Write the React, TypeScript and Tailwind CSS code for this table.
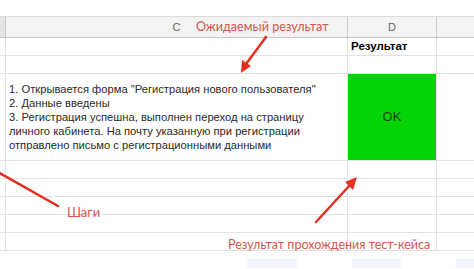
const rows = [18, 18, 18, 18, 18];

function Arrows() {
  return (
    <svg className="absolute inset-0 pointer-events-none" width="474" height="269" viewBox="0 0 474 269">
      {/* expected result -> cell */}
      <line x1="266" y1="37" x2="246" y2="64" stroke="#e5301f" strokeWidth="2.5" strokeLinecap="round" />
      <polygon points="241,73 242,60 251,66" fill="#e5301f" />
      {/* steps */}
      <line x1="-4" y1="171" x2="58" y2="206" stroke="#e5301f" strokeWidth="2.5" strokeLinecap="round" />
      {/* test result -> cell */}
      <line x1="316" y1="222" x2="350" y2="185" stroke="#e5301f" strokeWidth="2.5" strokeLinecap="round" />
      <polygon points="357,177 353,190 345,182" fill="#e5301f" />
    </svg>
  );
}

export default function App() {
  return (
    <div className="relative w-[474px] h-[269px] overflow-hidden bg-white font-['Liberation_Sans',Arial,sans-serif] text-[#222]">
      <div className="h-[16px]" />
      <div className="grid grid-cols-[6px_342px_89px_1fr] border-t border-[#dcdcdc]">
        {/* header */}
        <div className="h-[21px] bg-[#e4e4e4] border-r border-b border-[#c8c8c8]" />
        <div className="h-[21px] bg-[#f3f3f3] border-r border-b border-[#c8c8c8] flex items-center justify-center text-[11px] text-[#666]">
          C
        </div>
        <div className="h-[21px] bg-[#f3f3f3] border-r border-b border-[#c8c8c8] flex items-center justify-center text-[11px] text-[#666]">
          D
        </div>
        <div className="h-[21px] bg-[#f3f3f3] border-b border-[#c8c8c8]" />

        {/* row: title */}
        <div className="h-[18px] border-r border-b border-[#e2e2e2]" />
        <div className="h-[18px] border-r border-b border-[#e2e2e2]" />
        <div className="h-[18px] border-r border-b border-[#e2e2e2] flex items-center px-[3px] text-[11.5px] font-bold text-black">
          Результат
        </div>
        <div className="h-[18px] border-b border-[#e2e2e2]" />

        {/* empty row */}
        <div className="h-[18px] border-r border-b border-[#e2e2e2]" />
        <div className="h-[18px] border-r border-b border-[#e2e2e2]" />
        <div className="h-[18px] border-r border-b border-[#e2e2e2]" />
        <div className="h-[18px] border-b border-[#e2e2e2]" />

        {/* steps row */}
        <div className="h-[87px] border-r border-b border-[#e2e2e2]" />
        <div className="h-[87px] border-r border-b border-[#e2e2e2] flex flex-col justify-center px-[3px] text-[11.2px] leading-[14px] text-[#2a2a2a]">
          <span>1. Открывается форма "Регистрация нового пользователя"</span>
          <span>2. Данные введены</span>
          <span>3. Регистрация успешна, выполнен переход на страницу</span>
          <span>личного кабинета. На почту указанную при регистрации</span>
          <span>отправлено письмо с регистрационными данными</span>
        </div>
        <div className="h-[87px] border-r border-b border-[#e2e2e2] bg-[#04d404] flex items-center justify-center text-[13px] text-[#1e3d1e]">
          OK
        </div>
        <div className="h-[87px] border-b border-[#e2e2e2]" />

        {rows.map((h, i) => (
          <div key={i} className="contents">
            <div className="h-[18px] border-r border-b border-[#e2e2e2]" />
            <div className="h-[18px] border-r border-b border-[#e2e2e2]" />
            <div className="h-[18px] border-r border-b border-[#e2e2e2]" />
            <div className="h-[18px] border-b border-[#e2e2e2]" />
          </div>
        ))}
      </div>

      {/* faint tabs at the bottom */}
      <div className="flex gap-[55px] pl-[247px] pt-[8px]">
        <div className="w-[54px] h-[9px] bg-[#f2f5fc]" />
        <div className="w-[53px] h-[9px] bg-[#f2f5fc]" />
        <div className="w-[20px] h-[9px] bg-[#f2f5fc]" />
      </div>

      {/* annotations */}
      <div className="absolute left-[196px] top-[18px] text-[12.6px] leading-[18px] text-[#d9544a] font-['Lato',sans-serif]">
        Ожидаемый результат
      </div>
      <div className="absolute left-[67px] top-[203px] text-[13px] leading-[18px] text-[#d9544a] font-['Lato',sans-serif]">
        Шаги
      </div>
      <div className="absolute left-[228px] top-[236px] text-[12.5px] leading-[18px] text-[#d9544a] font-['Lato',sans-serif]">
        Результат прохождения тест-кейса
      </div>

      <Arrows />
    </div>
  );
}
